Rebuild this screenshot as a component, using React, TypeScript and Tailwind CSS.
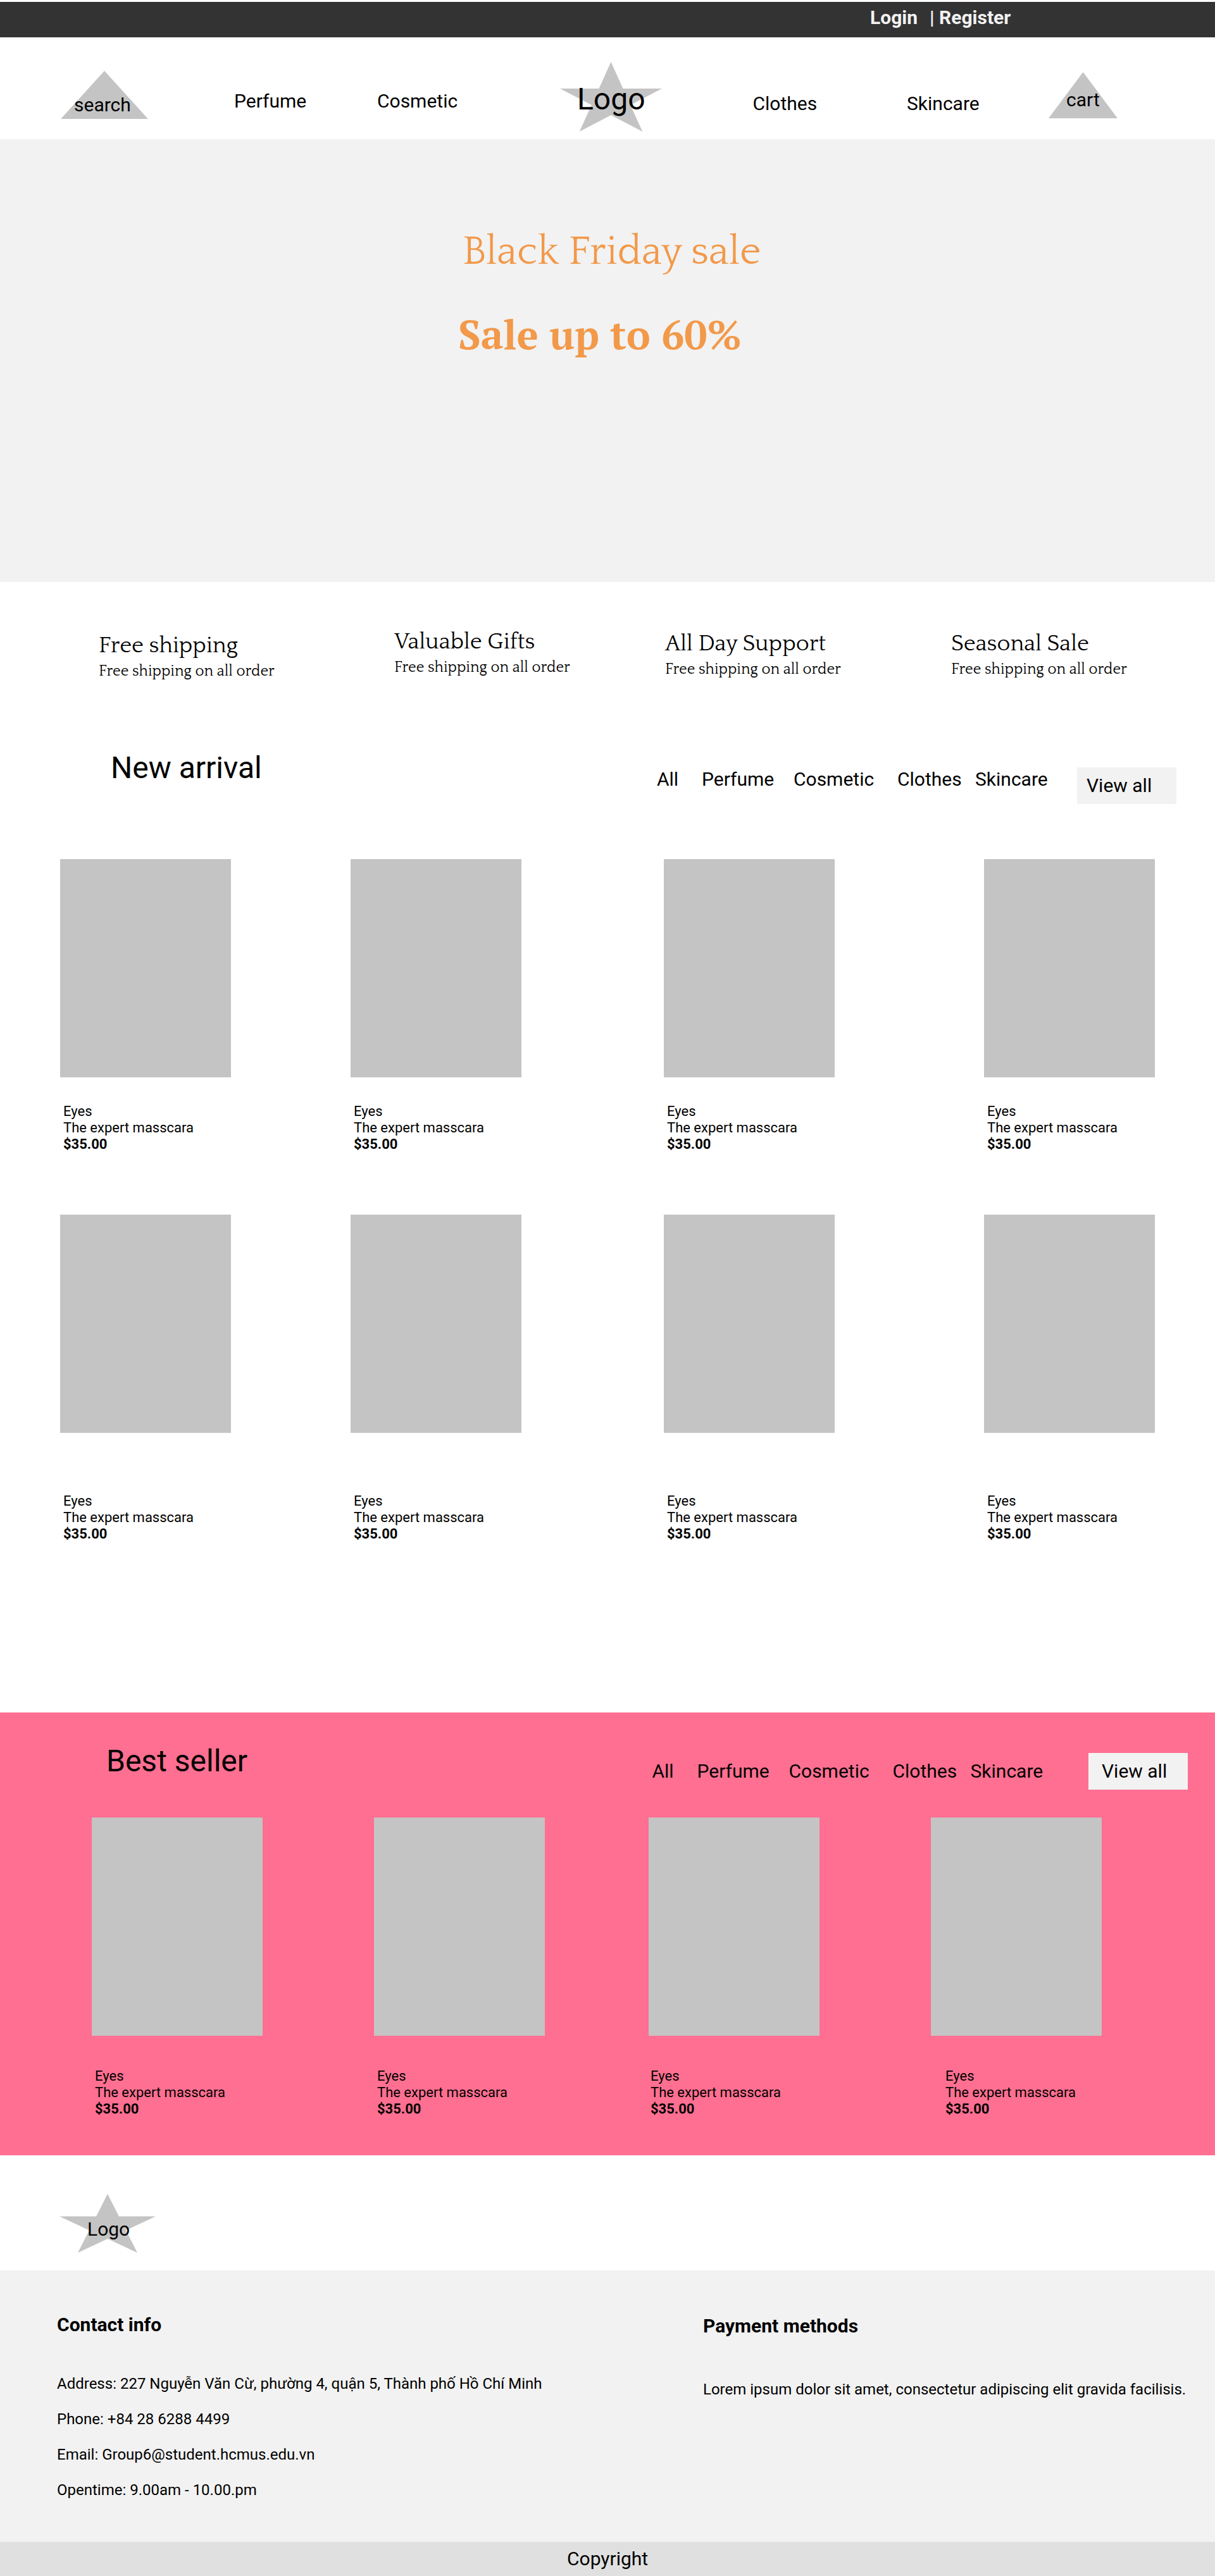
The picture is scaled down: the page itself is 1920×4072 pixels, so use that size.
import React from "react";

function Star({ className }: { className: string }) {
  return (
    <svg className={className} viewBox="0 0 100 100" preserveAspectRatio="none" fill="#c4c4c4">
      <polygon points="50,0 61.8,38.2 100,38.2 69.1,61.8 80.9,100 50,76.4 19.1,100 30.9,61.8 0,38.2 38.2,38.2" />
    </svg>
  );
}

function Triangle({ className }: { className: string }) {
  return (
    <svg className={className} viewBox="0 0 100 100" preserveAspectRatio="none" fill="#c4c4c4">
      <polygon points="50,0 100,100 0,100" />
    </svg>
  );
}

function Header() {
  return (
    <header>
      <div className="mt-[3px] flex h-14 bg-[#333333] pt-[7px] pl-[1375px] font-bold text-[#f2f2f2]">
        <a className="w-[94px]">Login</a>
        <a>| Register</a>
      </div>
      <nav className="grid h-[161px] grid-cols-[274px_226px_289px_304.5px_243.5px_224px_109px] items-start pl-24">
        <div className="relative mt-[53px] h-[76px] w-[138px]">
          <Triangle className="h-full w-full" />
          <span className="absolute top-[36px] left-[21px]">search</span>
        </div>
        <a className="mt-[83px]">Perfume</a>
        <a className="mt-[83px]">Cosmetic</a>
        <div className="relative mt-[39px] h-[110px] w-[161px]">
          <Star className="h-full w-full" />
          <span className="absolute top-[31px] left-[27px] text-5xl leading-[56px]">Logo</span>
        </div>
        <a className="mt-[87px]">Clothes</a>
        <a className="mt-[87px]">Skincare</a>
        <div className="relative mt-[55px] h-[73px] w-[109px]">
          <Triangle className="h-full w-full" />
          <span className="absolute top-[26px] left-[28px]">cart</span>
        </div>
      </nav>
    </header>
  );
}

function Hero() {
  return (
    <section className="h-[700px] bg-[#f2f2f2] pt-[139px] text-[64px] text-[#f2994a]">
      <h1 className="ml-[731px] font-['Quattrocento','Liberation_Serif',serif] leading-[80px]">Black Friday sale</h1>
      <p className="mt-[47px] ml-[724px] font-['PT_Serif','Liberation_Serif',serif] leading-[84px] font-bold">
        Sale up to 60%
      </p>
    </section>
  );
}

const features = [
  { title: "Free shipping", box: "pt-[80px]" },
  { title: "Valuable Gifts", box: "pt-[74px]" },
  { title: "All Day Support", box: "pt-[77px]" },
  { title: "Seasonal Sale", box: "pt-[77px]" },
];

function Features() {
  return (
    <section className="grid h-[265px] grid-cols-[467px_428px_452px_340px] pl-[156px] font-['Quattrocento','Liberation_Serif',serif]">
      {features.map((f) => (
        <div key={f.title} className={f.box}>
          <h3 className="text-4xl leading-[40px]">{f.title}</h3>
          <p className="mt-[6px] text-2xl leading-[30px]">Free shipping on all order</p>
        </div>
      ))}
    </section>
  );
}

function Tabs({ className }: { className: string }) {
  return (
    <div className={`grid grid-cols-[71px_145px_164px_123px_130px] ${className}`}>
      <a>All</a>
      <a>Perfume</a>
      <a>Cosmetic</a>
      <a>Clothes</a>
      <a>Skincare</a>
    </div>
  );
}

function Product({ text }: { text: string }) {
  return (
    <article>
      <div className="h-[345px] w-[270px] bg-[#c4c4c4]" />
      <div className={`text-[22px] leading-[26px] ${text}`}>
        <p>Eyes</p>
        <p>The expert masscara</p>
        <p className="font-bold">$35.00</p>
      </div>
    </article>
  );
}

function NewArrival() {
  return (
    <section className="h-[1522px]">
      <div className="flex h-[173px] items-start pl-[175px]">
        <h2 className="mt-px w-[863px] text-5xl leading-[56px]">New arrival</h2>
        <Tabs className="mt-[29px] w-[664px]" />
        <button className="mt-[28px] h-[58px] w-[157px] bg-[#f2f2f2] pt-[11px] pb-3 pl-[15px] text-left">View all</button>
      </div>
      <div className="grid h-[562px] grid-cols-[459px_495px_506px_270px] pl-[95px]">
        {[0, 1, 2, 3].map((i) => (
          <Product key={i} text="pt-[41px] pl-[5px]" />
        ))}
      </div>
      <div className="grid grid-cols-[459px_495px_506px_270px] pl-[95px]">
        {[0, 1, 2, 3].map((i) => (
          <Product key={i} text="pt-[95px] pl-[5px]" />
        ))}
      </div>
    </section>
  );
}

function BestSeller() {
  return (
    <section className="h-[700px] bg-[#ff6f91]">
      <div className="flex h-[166px] items-start pt-12 pl-[168px]">
        <h2 className="mt-px w-[862.5px] text-5xl leading-[56px]">Best seller</h2>
        <Tabs className="mt-[27px] w-[689.5px]" />
        <button className="mt-[16px] h-[58px] w-[157px] bg-[#f2f2f2] pt-[11px] pb-3 pl-[21px] text-left">View all</button>
      </div>
      <div className="grid grid-cols-[446px_434px_446px_270px] pl-[145px]">
        <Product text="pt-[51px] pl-[5px]" />
        <Product text="pt-[51px] pl-[5px]" />
        <Product text="pt-[51px] pl-[3px]" />
        <Product text="pt-[51px] pl-[23px]" />
      </div>
    </section>
  );
}

function Footer() {
  return (
    <footer>
      <div className="h-[182px] pt-[61px] pl-[94px]">
        <div className="relative h-[93px] w-[152px]">
          <Star className="h-full w-full" />
          <span className="absolute top-[38px] left-[44px]">Logo</span>
        </div>
      </div>
      <div className="flex h-[429px] items-start bg-[#f2f2f2] pl-[90px]">
        <div className="w-[1021px] pt-[68px]">
          <h4 className="font-bold">Contact info</h4>
          <div className="mt-[62px] flex flex-col gap-7 text-2xl leading-[28px]">
            <p>Address: 227 Nguyễn Văn Cừ, phường 4, quận 5, Thành phố Hồ Chí Minh</p>
            <p>Phone: +84 28 6288 4499</p>
            <p>Email: Group6@student.hcmus.edu.vn</p>
            <p>Opentime: 9.00am - 10.00.pm</p>
          </div>
        </div>
        <div className="pt-[70px]">
          <h4 className="font-bold">Payment methods</h4>
          <p className="mt-[69px] text-2xl leading-[28px] whitespace-nowrap">
            Lorem ipsum dolor sit amet, consectetur adipiscing elit gravida facilisis.
          </p>
        </div>
      </div>
      <div className="h-[54px] bg-[#e0e0e0] pt-[9px] pl-[896px]">Copyright</div>
    </footer>
  );
}

export default function App() {
  return (
    <div className="flow-root h-[4072px] w-[1920px] overflow-hidden bg-white font-['Roboto',sans-serif] text-[30px] leading-[35px] text-black">
      <Header />
      <Hero />
      <Features />
      <NewArrival />
      <BestSeller />
      <Footer />
    </div>
  );
}
